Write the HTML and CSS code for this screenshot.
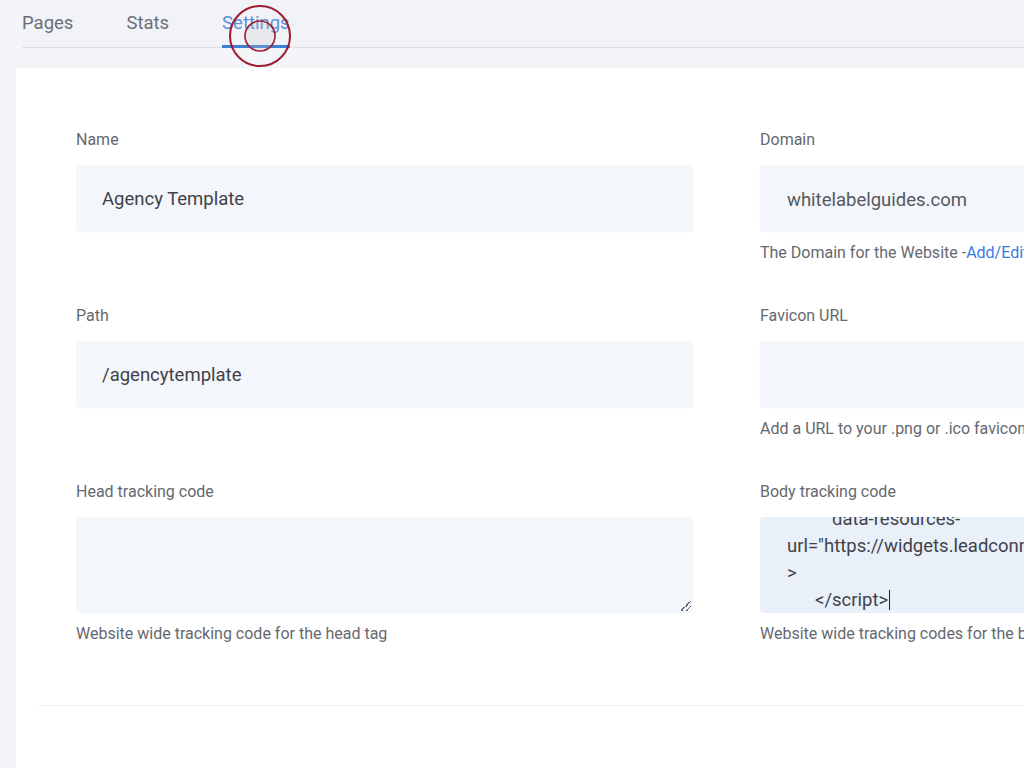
FILE: index.html
```html
<!DOCTYPE html>
<html lang="en">
<head>
<meta charset="utf-8">
<title>Settings</title>
<link rel="stylesheet" href="styles.css">
</head>
<body>
<div class="page">
  <nav class="tabs">
    <a class="tab">Pages</a>
    <a class="tab">Stats</a>
    <a class="tab active">Settings</a>
  </nav>
  <svg class="click-marker" width="66" height="66" viewBox="0 0 66 66" aria-hidden="true">
    <circle cx="33" cy="33" r="30" fill="none" stroke="#9e1c32" stroke-width="2"/>
    <circle cx="33" cy="33" r="15" fill="rgba(200,200,205,0.25)" stroke="#9e1c32" stroke-width="1.6"/>
  </svg>
  <section class="card">
    <div class="form-grid">
      <div class="field">
        <label class="label">Name</label>
        <div class="input">Agency Template</div>
      </div>
      <div class="field">
        <label class="label">Domain</label>
        <div class="input muted">whitelabelguides.com</div>
        <p class="help">The Domain for the Website -<span class="link">Add/Edit Domain</span></p>
      </div>
      <div class="field">
        <label class="label">Path</label>
        <div class="input">/agencytemplate</div>
      </div>
      <div class="field">
        <label class="label">Favicon URL</label>
        <div class="input"></div>
        <p class="help">Add a URL to your .png or .ico favicon file</p>
      </div>
      <div class="field">
        <label class="label">Head tracking code</label>
        <div class="textarea"><span class="resize"></span></div>
        <p class="help">Website wide tracking code for the head tag</p>
      </div>
      <div class="field">
        <label class="label">Body tracking code</label>
        <div class="textarea focused">
          <div class="code">
            <div class="line ind2">data-resources-</div>
            <div class="line">url="https://widgets.leadconnectorhq.com/chat-widget/loader.js"</div>
            <div class="line">&gt;</div>
            <div class="line ind1">&lt;/script&gt;<span class="caret"></span></div>
          </div>
        </div>
        <p class="help">Website wide tracking codes for the body tag</p>
      </div>
    </div>
    <hr class="divider">
  </section>
</div>
</body>
</html>
```

FILE: styles.css
```css
html, body {
  margin: 0;
  padding: 0;
  height: 100%;
  overflow: hidden;
}
body {
  background: #f3f5f9;
  font-family: Roboto, "Liberation Sans", Arial, sans-serif;
  color: #5f6368;
}
.page {
  position: relative;
  width: 1024px;
  height: 768px;
  overflow: hidden;
}
.tabs {
  display: flex;
  margin-left: 22px;
  height: 48px;
  border-bottom: 1px solid #dcdfe5;
  box-sizing: border-box;
  align-items: stretch;
  background: #f1f3f6;
}
.tab {
  font-size: 18.5px;
  color: #6b7078;
  line-height: 24px;
  padding-top: 11px;
  box-sizing: border-box;
  border-bottom: 3px solid transparent;
  margin-bottom: -1px;
}
.tab:nth-child(2) { margin-left: 53px; }
.tab:nth-child(3) { margin-left: 53px; }
.tab.active {
  color: #5b8fe0;
  border-bottom-color: #3d7fd4;
}
.click-marker {
  position: absolute;
  left: 227px;
  top: 3px;
}
.card {
  margin: 20px 0 0 16px;
  width: 1500px;
  height: 720px;
  background: #ffffff;
  padding: 62px 0 0 22px;
  box-sizing: border-box;
}
.form-grid {
  display: grid;
  grid-template-columns: 617px 617px;
  column-gap: 67px;
  row-gap: 43px;
  margin-left: 38px;
}
.field {
  display: flex;
  flex-direction: column;
}
.label {
  font-size: 16px;
  line-height: 20px;
  color: #65696f;
  margin-bottom: 15px;
}
.input {
  height: 67px;
  background: #f3f6fa;
  border-radius: 4px;
  box-shadow: 0 0 2px rgba(0,0,0,0.04);
  font-size: 18.5px;
  color: #3f4349;
  padding-left: 26px;
  display: flex;
  align-items: center;
  box-sizing: border-box;
}
.input.muted {
  color: #55595f;
  padding-left: 27px;
  padding-top: 3px;
}
.help {
  margin: 11px 0 0;
  font-size: 16px;
  line-height: 20px;
  color: #65696f;
  white-space: nowrap;
}
.link { color: #3b7be0; }
.textarea {
  position: relative;
  height: 96px;
  background: #f3f6fa;
  border-radius: 4px;
  box-sizing: border-box;
  overflow: hidden;
}
.textarea.focused {
  background: #e9f0fa;
  display: flex;
  flex-direction: column;
  justify-content: flex-end;
}
.resize {
  position: absolute;
  right: 2px;
  bottom: 2px;
  width: 10px;
  height: 10px;
  background:
    linear-gradient(135deg, transparent 45%, #6b6f75 45%, #6b6f75 55%, transparent 55%) right bottom / 10px 10px no-repeat,
    linear-gradient(135deg, transparent 45%, #6b6f75 45%, #6b6f75 60%, transparent 60%) right bottom / 5px 5px no-repeat;
}
.code {
  padding: 0 0 0 27px;
  margin-bottom: -1px;
  font-size: 18.5px;
  line-height: 27px;
  color: #3f4349;
  white-space: nowrap;
}
.line.ind1 { padding-left: 28px; }
.line.ind2 { padding-left: 45px; }
.caret {
  display: inline-block;
  width: 1px;
  height: 20px;
  background: #222;
  vertical-align: -4px;
  margin-left: 1px;
}
.divider {
  margin: 61px 0 0 0;
  border: 0;
  border-top: 1px solid #eceef1;
  width: 1400px;
}
```
